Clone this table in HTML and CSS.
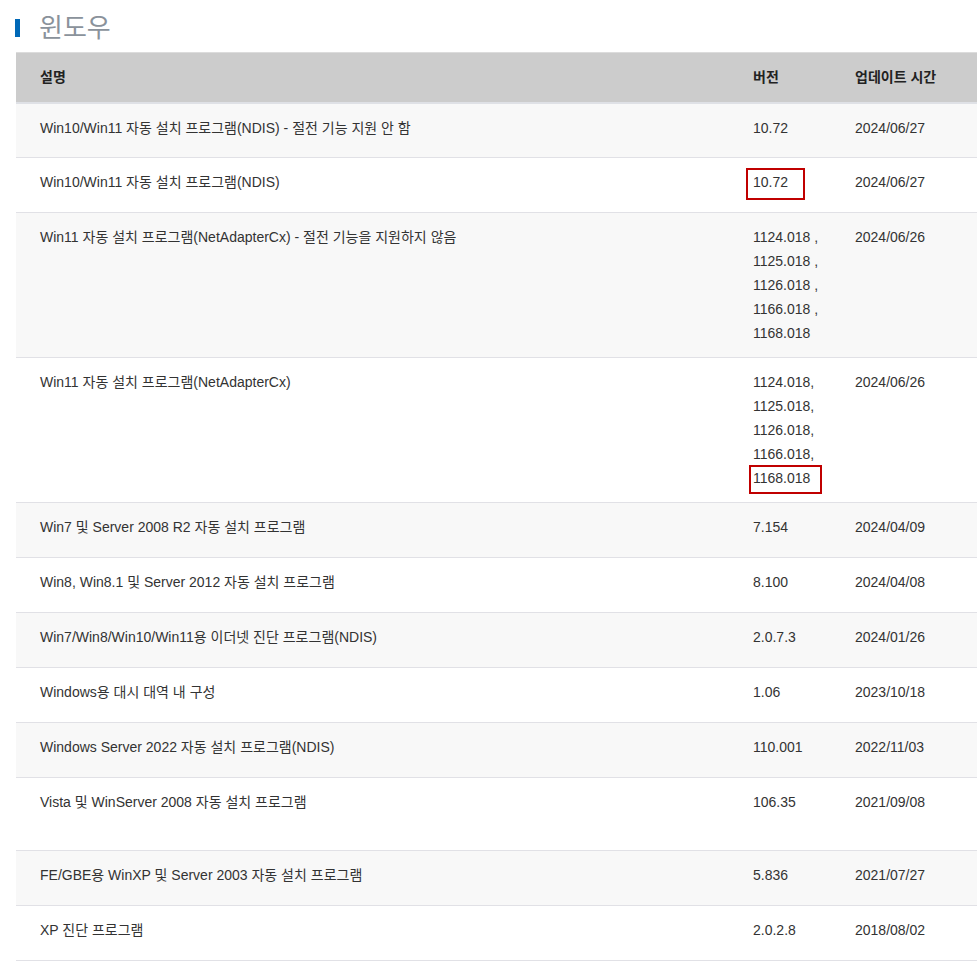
FILE: index.html
```html
<!DOCTYPE html>
<html lang="ko">
<head>
    <meta charset="UTF-8">
    <meta name="viewport" content="width=device-width, initial-scale=1.0">
    <title>윈도우 드라이버</title>
    <link rel="stylesheet" href="styles.css">
</head>
<body>
    <div class="driver-section">
        <h2 class="section-title">윈도우</h2>

        <table class="driver-table">
            <thead>
                <tr>
                    <th class="col-desc">설명</th>
                    <th class="col-ver">버전</th>
                    <th class="col-date">업데이트 시간</th>
                </tr>
            </thead>
            <tbody>
                <tr>
                    <td>Win10/Win11 자동 설치 프로그램(NDIS) - 절전 기능 지원 안 함</td>
                    <td>10.72</td>
                    <td>2024/06/27</td>
                </tr>
                <tr>
                    <td>Win10/Win11 자동 설치 프로그램(NDIS)</td>
                    <td><span class="mark mark-short">10.72</span></td>
                    <td>2024/06/27</td>
                </tr>
                <tr>
                    <td>Win11 자동 설치 프로그램(NetAdapterCx) - 절전 기능을 지원하지 않음</td>
                    <td>1124.018 ,<br>1125.018 ,<br>1126.018 ,<br>1166.018 ,<br>1168.018</td>
                    <td>2024/06/26</td>
                </tr>
                <tr>
                    <td>Win11 자동 설치 프로그램(NetAdapterCx)</td>
                    <td>1124.018,<br>1125.018,<br>1126.018,<br>1166.018,<br><span class="mark mark-long">1168.018</span></td>
                    <td>2024/06/26</td>
                </tr>
                <tr>
                    <td>Win7 및 Server 2008 R2 자동 설치 프로그램</td>
                    <td>7.154</td>
                    <td>2024/04/09</td>
                </tr>
                <tr>
                    <td>Win8, Win8.1 및 Server 2012 자동 설치 프로그램</td>
                    <td>8.100</td>
                    <td>2024/04/08</td>
                </tr>
                <tr>
                    <td>Win7/Win8/Win10/Win11용 이더넷 진단 프로그램(NDIS)</td>
                    <td>2.0.7.3</td>
                    <td>2024/01/26</td>
                </tr>
                <tr>
                    <td>Windows용 대시 대역 내 구성</td>
                    <td>1.06</td>
                    <td>2023/10/18</td>
                </tr>
                <tr>
                    <td>Windows Server 2022 자동 설치 프로그램(NDIS)</td>
                    <td>110.001</td>
                    <td>2022/11/03</td>
                </tr>
                <tr class="tall">
                    <td>Vista 및 WinServer 2008 자동 설치 프로그램</td>
                    <td>106.35</td>
                    <td>2021/09/08</td>
                </tr>
                <tr>
                    <td>FE/GBE용 WinXP 및 Server 2003 자동 설치 프로그램</td>
                    <td>5.836</td>
                    <td>2021/07/27</td>
                </tr>
                <tr>
                    <td>XP 진단 프로그램</td>
                    <td>2.0.2.8</td>
                    <td>2018/08/02</td>
                </tr>
            </tbody>
        </table>
    </div>
</body>
</html>
```

FILE: styles.css
```css
* {
    margin: 0;
    padding: 0;
    box-sizing: border-box;
}

body {
    font-family: "Liberation Sans", Arial, "Noto Sans CJK KR", sans-serif;
    background: #fff;
    color: #333;
    overflow: hidden;
}

.driver-section {
    padding: 9px 0 0 15px;
}

.section-title {
    font-size: 26px;
    font-weight: normal;
    line-height: 36px;
    color: #8a929b;
    border-left: 5px solid #0068b7;
    padding-left: 19px;
    height: 18px;
    display: flex;
    align-items: center;
    margin: 10px 0 15px;
}

.driver-table {
    width: 962px;
    margin-left: 1px;
    border-collapse: collapse;
    table-layout: fixed;
    font-size: 14px;
    line-height: 24px;
}

.col-desc { width: 713px; }
.col-ver { width: 102px; }
.col-date { width: 147px; }

.driver-table th {
    background: #cccccc;
    border-top: 1px solid #dcdcdc;
    border-bottom: 2px solid #dfe1e6;
    height: 50px;
    text-align: left;
    font-weight: bold;
    color: #222;
    padding: 0 24px;
}

.driver-table td {
    padding: 12px 24px 12px;
    height: 55px;
    vertical-align: top;
    white-space: nowrap;
    border-bottom: 1px solid #e1e1e6;
}

.driver-table tbody tr:nth-child(odd) td {
    background: #f8f8f8;
}

.driver-table tr.tall td {
    height: 73px;
}

.mark {
    position: relative;
    display: inline-block;
}

.mark::after {
    content: "";
    position: absolute;
    border: 2px solid #c00000;
}

.mark-short::after {
    left: -7px;
    top: -2px;
    width: 55px;
    height: 28px;
}

.mark-long::after {
    left: -4px;
    top: -1px;
    width: 69px;
    height: 25px;
}
```
